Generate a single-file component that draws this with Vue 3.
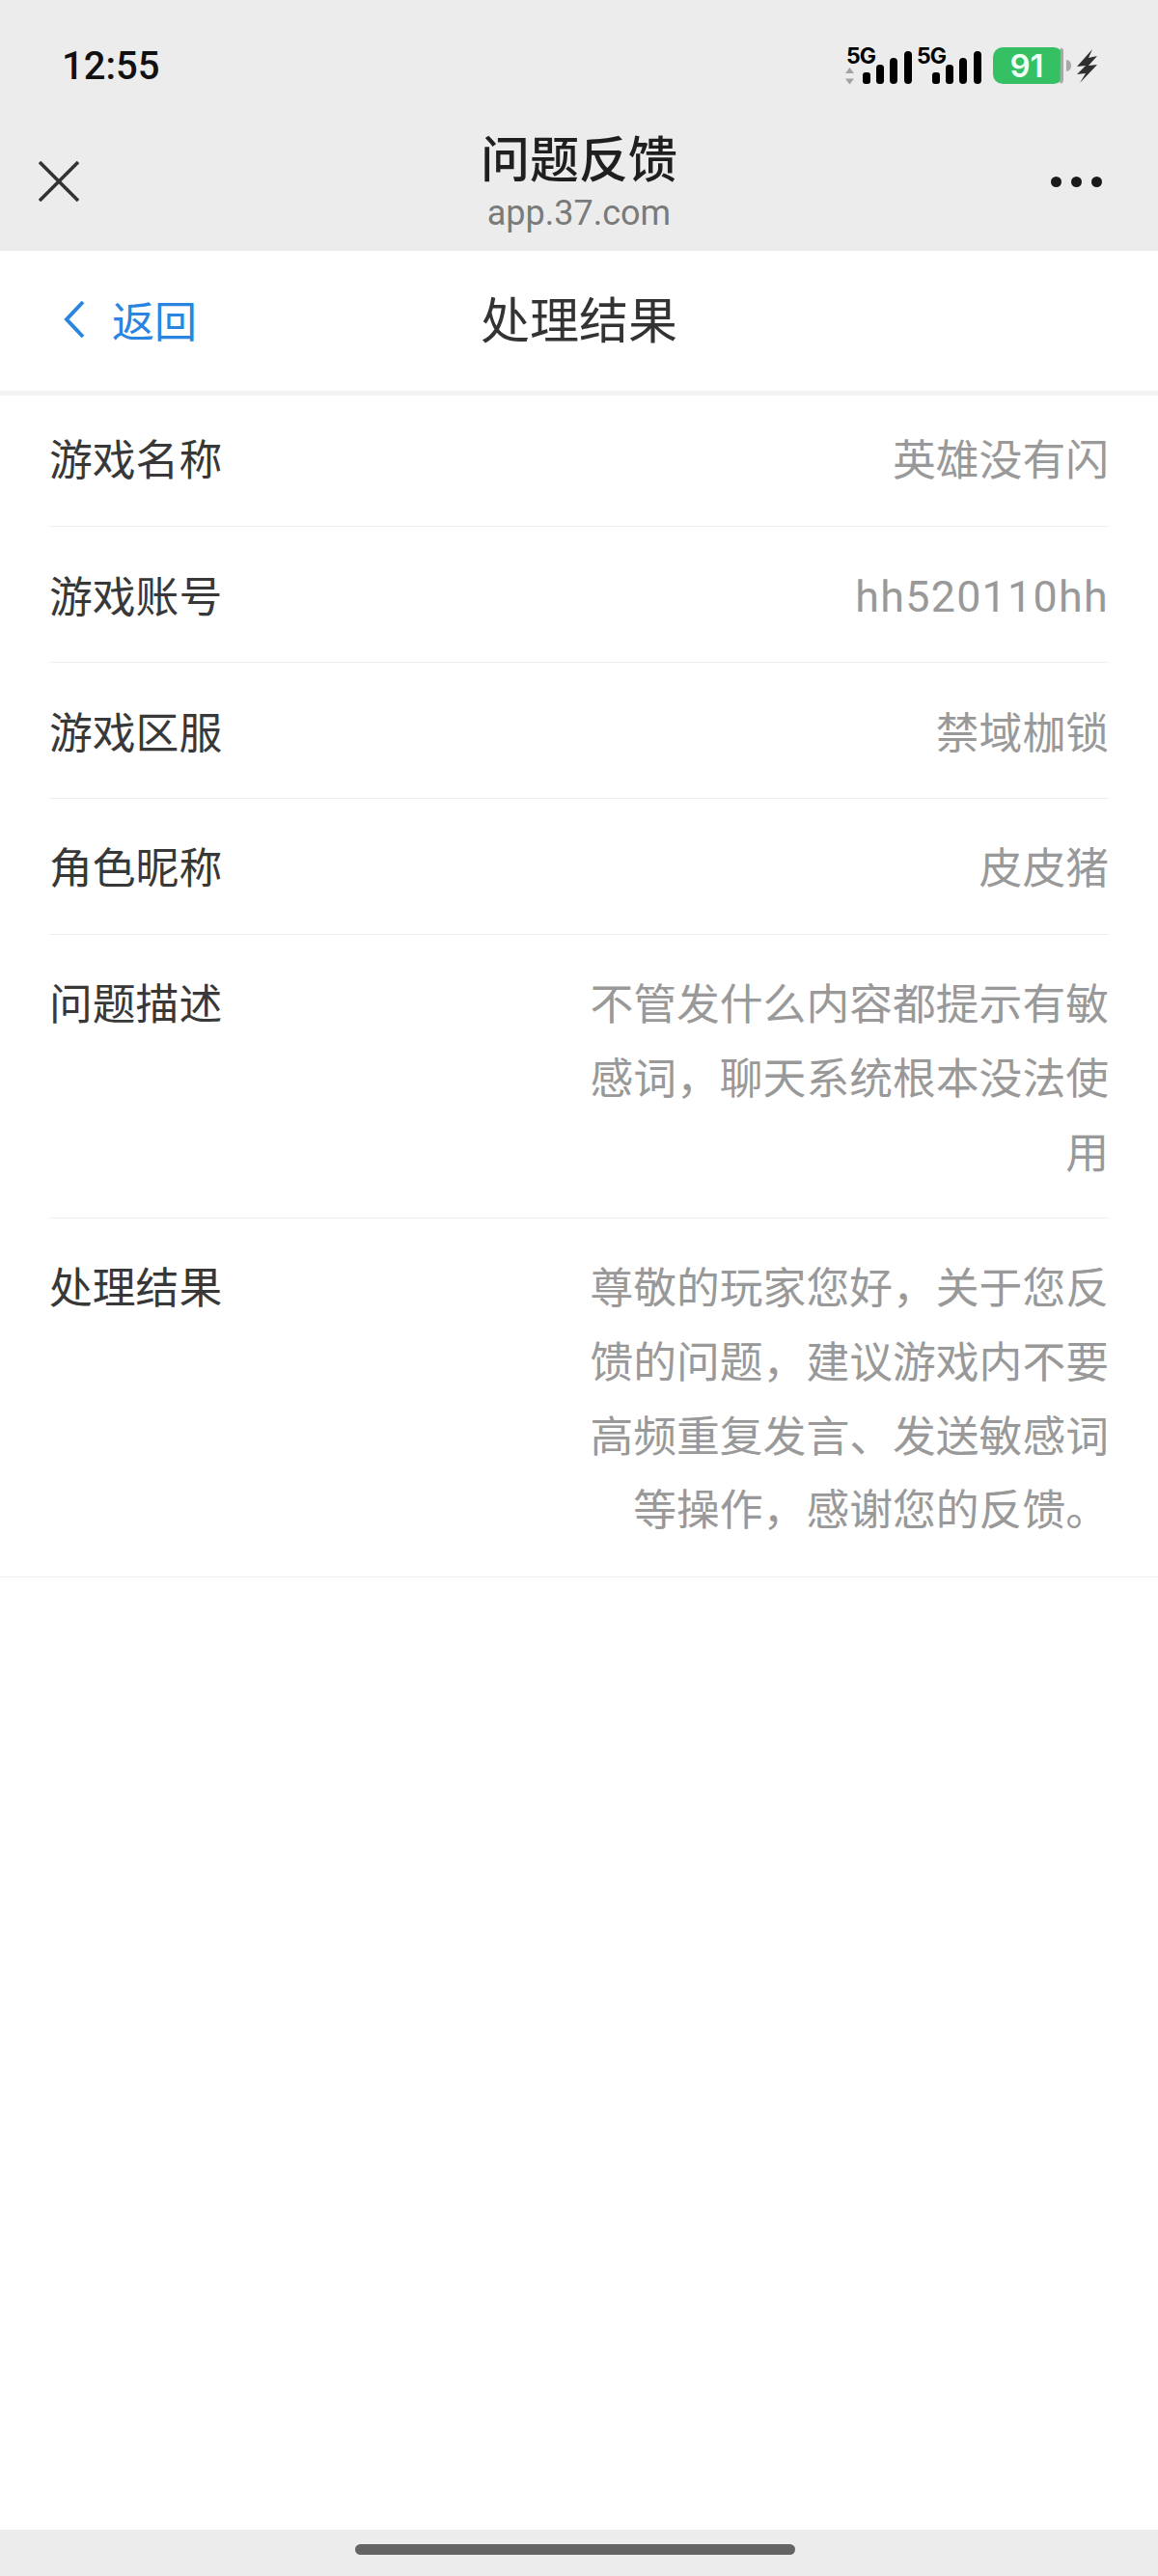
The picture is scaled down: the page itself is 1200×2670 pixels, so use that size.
<script setup>
const rows = [
  { label: "游戏名称", value: "英雄没有闪" },
  { label: "游戏账号", value: "hh520110hh", latin: true },
  { label: "游戏区服", value: "禁域枷锁" },
  { label: "角色昵称", value: "皮皮猪" },
  { label: "问题描述", value: "不管发什么内容都提示有敏感词，聊天系统根本没法使用" },
  { label: "处理结果", value: "尊敬的玩家您好，关于您反馈的问题，建议游戏内不要高频重复发言、发送敏感词等操作，感谢您的反馈。" },
];
</script>

<template>
  <div class="page">
    <header class="top">
      <div class="status">
        <span class="time">12:55</span>
        <svg class="status-icons" width="264" height="60" viewBox="876 38 264 60">
          <text x="877" y="66" class="net">5G</text>
          <path d="M880.5 70l4.500 6h-9zM880.500 87.500l-4.500-6h9z" fill="#a3a3a3" />
          <rect x="894" y="75" width="8" height="12" rx="3" />
          <rect x="908" y="67" width="8" height="20" rx="3.500" />
          <rect x="922" y="60" width="8" height="27" rx="4" />
          <rect x="937" y="53" width="8" height="34" rx="4" />
          <text x="950" y="66" class="net">5G</text>
          <rect x="966" y="75" width="8" height="12" rx="3" />
          <rect x="980" y="67" width="8" height="20" rx="3.500" />
          <rect x="994" y="60" width="8" height="27" rx="4" />
          <rect x="1009" y="53" width="8" height="34" rx="4" />
          <rect x="1029" y="49" width="73" height="38" rx="10" fill="#35c163" />
          <path d="M1099 49.500h-.500a3 3 0 0 1 3.500 3v31a3 3 0 0 1-3.500 3z" fill="#a8a8a8" />
          <path d="M1105 62c3.500.500 5 3 5 6s-1.500 5.500-5 6z" fill="#a8a8a8" />
          <text x="1064" y="80" class="level" text-anchor="middle">91</text>
          <path d="M1132 51L1116 69l9-1-9 9 9-1-6 10 18-19-9 1 9-10-9 2z" fill="#2f2f2f" />
        </svg>
      </div>
      <div class="nav">
        <svg class="close" width="42" height="42" viewBox="0 0 42 42">
          <path d="M1 1l40 40M41 1L1 41" stroke="#333" stroke-width="3.600" fill="none" />
        </svg>
        <div class="nav-title">
          <div class="title">问题反馈</div>
          <div class="domain">app.37.com</div>
        </div>
        <div class="more">
          <i></i><i></i><i></i>
        </div>
      </div>
    </header>

    <div class="subbar">
      <a class="back">
        <svg width="24" height="40" viewBox="0 0 24 40">
          <path d="M21 2L4 20l17 18" stroke="#2a85e0" stroke-width="4" fill="none" />
        </svg>
        <span>返回</span>
      </a>
      <div class="subtitle">处理结果</div>
    </div>

    <main class="list">
      <div v-for="row in rows" :key="row.label" class="row">
        <div class="label">{{ row.label }}</div>
        <div class="value" :class="{ latin: row.latin }">{{ row.value }}</div>
      </div>
    </main>

    <footer class="home">
      <div class="home-bar"></div>
    </footer>
  </div>
</template>

<style>
body {
  background: #fff;
}
</style>

<style scoped>
.page {
  display: flex;
  flex-direction: column;
  height: 2670px;
  overflow: hidden;
  background: #fff;
  font-family: "Noto Sans CJK SC", "Noto Sans", sans-serif;
}

.top {
  height: 260px;
  background: #ececec;
  flex-shrink: 0;
}

.status {
  display: flex;
  justify-content: space-between;
  align-items: center;
  height: 136px;
  padding: 0 60px 0 64px;
}

.time {
  font-family: Roboto, sans-serif;
  font-size: 40px;
  font-weight: 500;
  color: #111;
}

.status-icons {
  fill: #000;
}

.net {
  font-family: Inter, sans-serif;
  font-size: 23px;
  font-weight: 700;
  letter-spacing: -1px;
}

.level {
  font-family: Inter, sans-serif;
  font-size: 33px;
  font-weight: 600;
  fill: #f2fff6;
}

.nav {
  position: relative;
  display: flex;
  justify-content: center;
  height: 124px;
}

.close {
  position: absolute;
  left: 40px;
  top: 31px;
}

.more {
  position: absolute;
  right: 58px;
  top: 47px;
  display: flex;
  gap: 10px;
}

.more i {
  width: 11px;
  height: 11px;
  border-radius: 50%;
  background: #1a1a1a;
}

.nav-title {
  text-align: center;
}

.title {
  margin-top: -9px;
  font-size: 51px;
  line-height: 70px;
  font-weight: 500;
  color: #1f1f1f;
}

.domain {
  font-family: Roboto, sans-serif;
  font-size: 36px;
  line-height: 48px;
  color: #7a7a7a;
}

.subbar {
  position: relative;
  display: flex;
  justify-content: center;
  align-items: center;
  height: 150px;
  padding-bottom: 7px;
  flex-shrink: 0;
  border-bottom: 5px solid #f3f3f3;
  box-sizing: border-box;
}

.back {
  position: absolute;
  left: 65px;
  top: 49px;
  display: flex;
  align-items: center;
  gap: 27px;
  font-size: 44px;
  line-height: 44px;
  color: #2a85e0;
}

.subtitle {
  font-size: 51px;
  color: #333;
}

.list {
  flex: 1;
}

.row {
  display: flex;
  justify-content: space-between;
  margin: 0 51px;
  padding: 31.500px 0;
  border-bottom: 1px solid #eeeeee;
  font-size: 44.800px;
  line-height: 76.800px;
}

.row:first-child {
  padding-top: 26px;
  padding-bottom: 32.500px;
}

.row:last-child {
  margin: 0;
  padding: 31px 51px 33px;
}

.label {
  color: #383838;
  flex-shrink: 0;
}

.value {
  width: 540px;
  text-align: right;
  color: #999;
}

.value.latin {
  padding-top: 3px;
  margin-bottom: -3px;
  font-family: Roboto, sans-serif;
  letter-spacing: 1.300px;
}

.home {
  display: flex;
  justify-content: center;
  height: 48px;
  padding-right: 8px;
  flex-shrink: 0;
  background: #ececec;
}

.home-bar {
  width: 456px;
  height: 11px;
  margin-top: 15px;
  border-radius: 6px;
  background: #646464;
}
</style>
